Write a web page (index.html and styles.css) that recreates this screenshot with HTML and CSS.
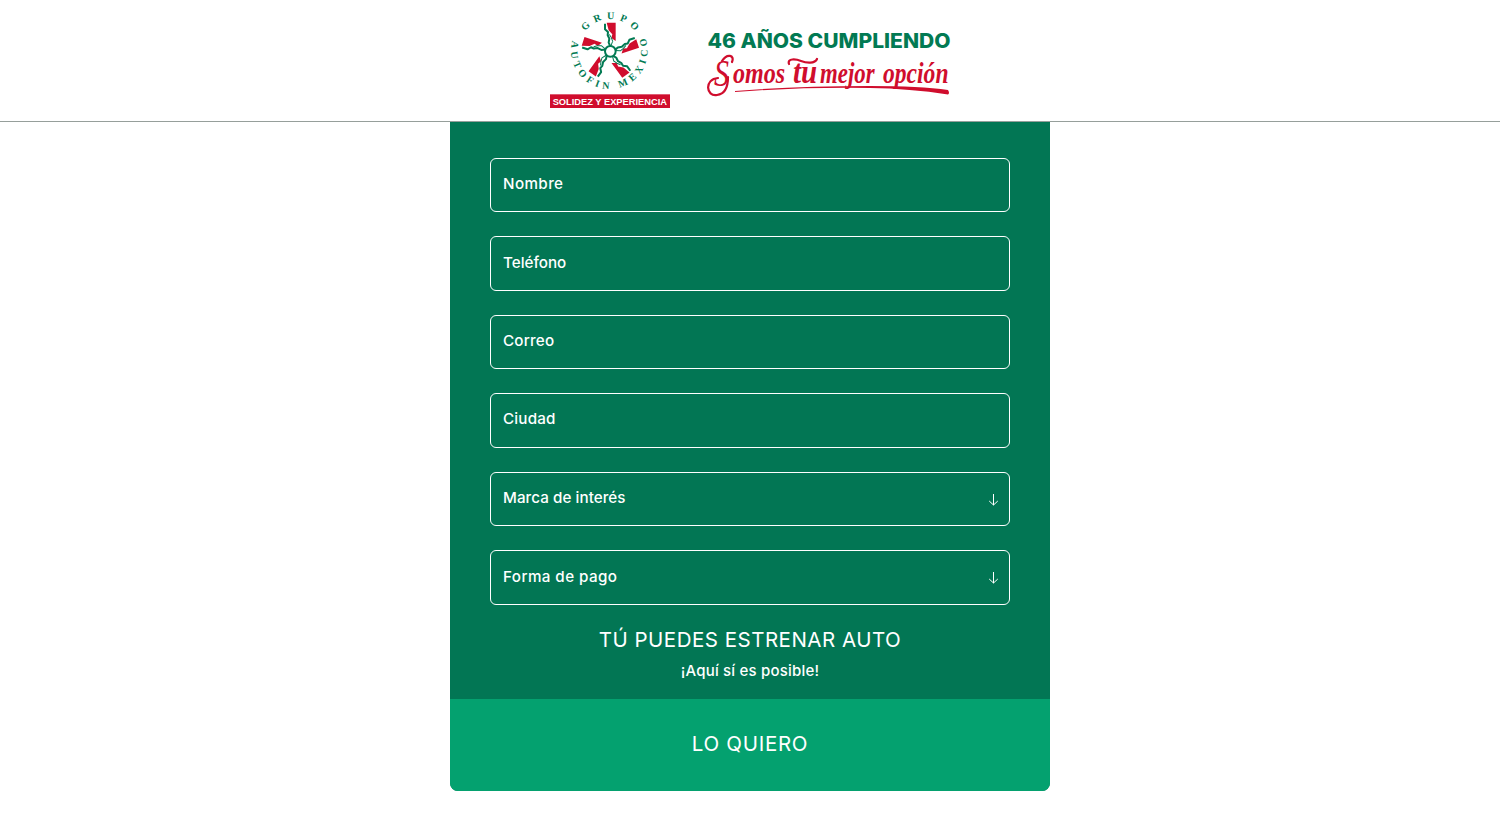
FILE: index.html
```html
<!DOCTYPE html>
<html lang="es">
<head>
<meta charset="utf-8">
<title>Grupo Autofin México</title>
<link rel="stylesheet" href="styles.css">
</head>
<body>
<header class="header">
  <svg class="logo" viewBox="15 18 360 291" role="img" aria-label="Grupo Autofin México">
    <defs>
      <path id="arc-top" d="M100 137A95 95 0 0 1 290 137"/>
      <path id="arc-bottom" d="M82 107A115 115 0 1 0 304 107"/>
      <g id="limb">
        <path class="red-fill" d="M185 53H212V108L199 99L202 88L191 76Z"/>
        <path class="limb-line" d="M196 124L191 113L193 101L188 90L189 81L180 73L180 56"/>
        <path class="limb-line limb-thin" d="M197 124L203 109L199 98L193 88"/>
      </g>
    </defs>
    <use href="#limb"/>
    <use href="#limb" transform="rotate(72 195 139)"/>
    <use href="#limb" transform="rotate(144 195 139)"/>
    <use href="#limb" transform="rotate(216 195 139)"/>
    <use href="#limb" transform="rotate(288 195 139)"/>
    <circle class="hub" cx="196" cy="139" r="16"/>
    <text class="ring-text"><textPath href="#arc-top" startOffset="50%" text-anchor="middle" textLength="172">GRUPO</textPath></text>
    <text class="ring-text"><textPath href="#arc-bottom" startOffset="0" textLength="430">AUTOFIN MEXICO</textPath></text>
    <rect class="red-fill" x="15" y="268" width="360" height="41"/>
    <text class="banner-text" x="23" y="299" textLength="343" lengthAdjust="spacingAndGlyphs">SOLIDEZ Y EXPERIENCIA</text>
  </svg>
  <svg class="slogan" viewBox="705 20 248 90" role="img" aria-label="46 años cumpliendo, somos tu mejor opción">
    <text class="years" x="707.500" y="47.500" textLength="243" lengthAdjust="spacingAndGlyphs">46 AÑOS CUMPLIENDO</text>
    <g class="script">
      <text class="script-cap" x="714" y="86" textLength="15" lengthAdjust="spacingAndGlyphs">S</text>
      <text transform="translate(733 83) scale(.78 1)" textLength="67" lengthAdjust="spacingAndGlyphs">omos</text>
      <text class="script-t" transform="translate(793 83) scale(.78 1)" textLength="31" lengthAdjust="spacingAndGlyphs">tu</text>
      <text transform="translate(820 83) scale(.78 1)" textLength="70" lengthAdjust="spacingAndGlyphs">mejor</text>
      <text transform="translate(883 83) scale(.78 1)" textLength="84" lengthAdjust="spacingAndGlyphs">opción</text>
    </g>
    <path class="flourish" d="M732 62C735 55 727 53 722 61M718 78C704 79 706 97 717 95C725 94 728 86 728 77M789 64C787 58 796 59 801 61S815 64 817 59"/>
    <path class="red-fill" d="M735 91Q795 86 870 86Q920 86 948 90Q950 93 948 94.500Q910 88.500 870 88Q800 87 735 92Z"/>
  </svg>
</header>
<main>
  <form class="form">
    <div class="fields">
      <div class="field nombre">Nombre</div>
      <div class="field telefono">Teléfono</div>
      <div class="field">Correo</div>
      <div class="field">Ciudad</div>
      <div class="field field-select"><span class="marca">Marca de interés</span><svg class="arrow" viewBox="0 0 10 12"><path d="M5.500 0V11M1.200 7L5.500 11L9.800 7"/></svg></div>
      <div class="field field-select"><span class="pago">Forma de pago</span><svg class="arrow" viewBox="0 0 10 12"><path d="M5.500 0V11M1.200 7L5.500 11L9.800 7"/></svg></div>
    </div>
    <h1 class="title">TÚ PUEDES ESTRENAR AUTO</h1>
    <p class="subtitle">¡Aquí sí es posible!</p>
    <button class="submit" type="button">LO QUIERO</button>
  </form>
</main>
</body>
</html>
```
FILE: styles.css
```css
* { box-sizing: border-box; }
body {
  margin: 0;
  background: #fff;
  font-family: Inter, "Liberation Sans", sans-serif;
}
.header {
  display: flex;
  justify-content: center;
  align-items: flex-start;
  gap: 35px;
  height: 122px;
  padding-top: 11px;
  padding-left: 3px;
  border-bottom: 1px solid #969f9b;
}
.logo { width: 120px; height: 97px; flex: none; }
.slogan { width: 248px; height: 90px; flex: none; margin-top: 9px; overflow: visible; }
.red-fill { fill: #d00d2d; }
.limb-line { fill: none; stroke: #027a53; stroke-width: 6; stroke-linejoin: round; }
.limb-thin { stroke-width: 3; }
.hub { fill: #fff; stroke: #027a53; stroke-width: 6; }
.ring-text { font: bold 30px "Liberation Serif", serif; fill: #027a53; }
.banner-text { font: bold 29px "Liberation Sans", sans-serif; fill: #fff; }
.years { font: 800 20px Inter, sans-serif; fill: #027a53; }
.script { font: italic bold 30px "Liberation Serif", serif; fill: #d00d2d; }
.script-cap { font-size: 38px; font-weight: normal; }
.script-t { font-size: 34px; }
.flourish { fill: none; stroke: #d00d2d; stroke-width: 2.2; stroke-linecap: round; }
.form {
  width: 600px;
  margin: 0 auto;
  padding-top: 36px;
  overflow: hidden;
  border-radius: 0 0 8px 8px;
  background: #027654;
  color: #fff;
  text-align: center;
}
.fields { display: grid; gap: 24px; padding: 0 40px; }
.field {
  display: flex;
  align-items: center;
  height: 54.450px;
  padding: 0 11px 3.300px 12px;
  border: 1px solid #fff;
  border-radius: 6px;
  font-size: 15.200px;
  font-weight: 500;
  letter-spacing: .2px;
}
.nombre { letter-spacing: .4px; }
.telefono { letter-spacing: 0; }
.field-select { justify-content: space-between; padding-bottom: 2.600px; }
.marca { letter-spacing: .06px; }
.pago { letter-spacing: .42px; }
.arrow { width: 10px; height: 12px; margin-top: 4px; fill: none; stroke: #fff; stroke-width: 1; }
.title {
  margin: 20px 0 0;
  font-size: 20.500px;
  font-weight: 400;
  line-height: 29px;
  letter-spacing: .5px;
}
.subtitle {
  margin: 6px 0 0;
  font-size: 15px;
  font-weight: 500;
  line-height: 21px;
  letter-spacing: .2px;
}
.submit {
  display: block;
  width: 100%;
  height: 92px;
  margin-top: 18px;
  padding: 0 0 3px;
  border: 0;
  background: #04a16f;
  color: #fff;
  font: 400 20.500px Inter, sans-serif;
  letter-spacing: .7px;
}
```
